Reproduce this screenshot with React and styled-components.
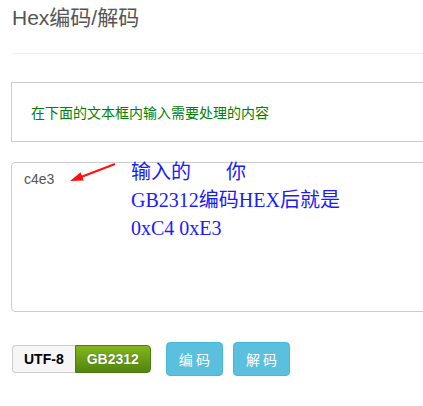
import React from 'react';
import styled, { createGlobalStyle } from 'styled-components';

const GlobalStyle = createGlobalStyle`
  html, body {
    margin: 0;
    padding: 0;
    background: #fff;
    overflow: hidden;
  }
  body {
    font-family: "Liberation Sans", "Noto Sans CJK SC", sans-serif;
    font-size: 14px;
    color: #333;
  }
`;

const Page = styled.div`
  width: 460px;
  padding: 0 0 0 11px;
`;

const Header = styled.div`
  margin-left: 1px;
  padding-top: 5px;
  height: 48px;
  border-bottom: 1px solid #eee;
`;

const Title = styled.h1`
  margin: 0;
  font-size: 21px;
  font-weight: normal;
  line-height: 26px;
  color: #555;
  font-family: "Liberation Sans", "Noto Sans CJK SC", sans-serif;
`;

const Notice = styled.div`
  margin-top: 28px;
  height: 58px;
  border: 1px solid #ccc;
  display: flex;
  align-items: center;
  padding-left: 19px;
  color: #008000;
  font-size: 14px;
  font-family: "Noto Sans CJK SC", sans-serif;
`;

const EditorWrap = styled.div`
  position: relative;
  margin-top: 20px;
`;

const Editor = styled.textarea`
  display: block;
  box-sizing: border-box;
  width: 100%;
  height: 150px;
  margin: 0;
  padding: 6px 12px;
  border: 1px solid #ccc;
  border-radius: 4px;
  resize: none;
  font-family: "Liberation Sans", sans-serif;
  font-size: 14px;
  line-height: 20px;
  color: #555;
  outline: none;
`;

const Note = styled.div`
  position: absolute;
  left: 120px;
  top: -4px;
  color: #1a1aff;
  font-family: "Liberation Serif", "Noto Sans CJK SC", serif;
  font-size: 20px;
  line-height: 28px;
  pointer-events: none;
`;

const NoteGap = styled.span`
  display: inline-block;
  width: 35px;
`;

const Arrow = styled.svg`
  position: absolute;
  left: 58px;
  top: -2px;
  pointer-events: none;
`;

const Actions = styled.div`
  display: flex;
  align-items: center;
  margin-top: 30px;
  padding-left: 1px;
`;

const Toggle = styled.div`
  display: flex;
  height: 28px;
  margin-top: -1px;
  margin-right: 15px;
`;

const ToggleSide = styled.span`
  display: flex;
  align-items: center;
  box-sizing: border-box;
  height: 28px;
  padding: 0 11px;
  font-weight: bold;
  font-size: 14px;
  font-family: "Liberation Sans", sans-serif;
  border: 1px solid ${p => (p.$active ? '#4a7d10' : '#ccc')};
  background: ${p => (p.$active ? 'linear-gradient(#83b71d, #4f840f)' : '#f6f6f6')};
  color: ${p => (p.$active ? '#fff' : '#000')};
  text-shadow: ${p => (p.$active ? '0 0 1px #2c5205' : 'none')};
  border-radius: ${p => (p.$first ? '4px 0 0 4px' : '0 4px 4px 0')};
  ${p => (p.$first ? 'border-right: none;' : '')}
`;

const InfoButton = styled.button`
  box-sizing: border-box;
  height: 34px;
  margin-right: 10px;
  padding: 6px 12px;
  border: 1px solid #46b8da;
  border-radius: 4px;
  background: #5bc0de;
  color: #fff;
  font-size: 14px;
  line-height: 20px;
  font-family: "Noto Sans CJK SC", sans-serif;
  white-space: pre;
  cursor: pointer;
`;

export default function App() {
  return (
    <Page>
      <GlobalStyle />
      <Header>
        <Title>Hex编码/解码</Title>
      </Header>
      <Notice>在下面的文本框内输入需要处理的内容</Notice>
      <EditorWrap>
        <Editor defaultValue="c4e3" spellCheck={false} />
        <Arrow width="62" height="28" viewBox="0 0 62 28">
          <line x1="46" y1="4" x2="12" y2="17" stroke="#ff1010" strokeWidth="2" />
          <polygon points="1,21 11.6,12.2 14.8,20.6" fill="#ff1010" />
        </Arrow>
        <Note>
          <div>输入的<NoteGap />你</div>
          <div>GB2312编码HEX后就是</div>
          <div>0xC4 0xE3</div>
        </Note>
      </EditorWrap>
      <Actions>
        <Toggle>
          <ToggleSide $first>UTF-8</ToggleSide>
          <ToggleSide $active>GB2312</ToggleSide>
        </Toggle>
        <InfoButton>编 码</InfoButton>
        <InfoButton>解 码</InfoButton>
      </Actions>
    </Page>
  );
}
